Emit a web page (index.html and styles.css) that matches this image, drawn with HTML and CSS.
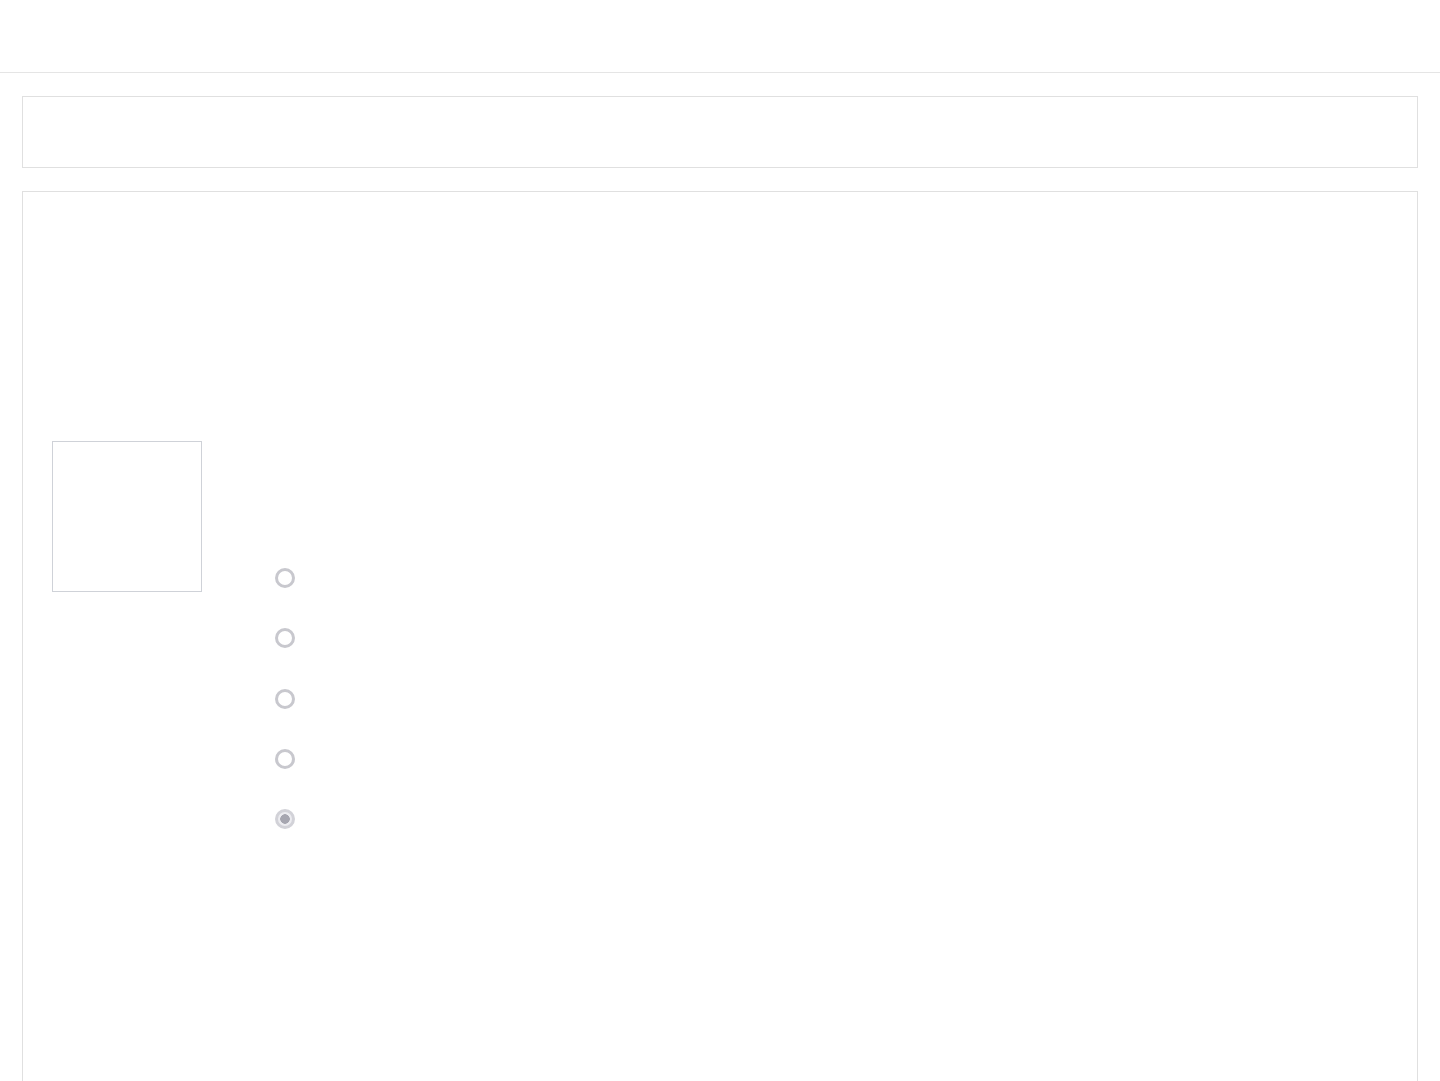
FILE: index.html
```html
<!DOCTYPE html>
<html lang="en">
<head>
  <meta charset="UTF-8">
  <title>Quiz</title>
  <meta name="viewport" content="width=device-width, initial-scale=1.0">
  <link rel="stylesheet" href="styles.css">
</head>
<body>
  <header class="topbar"></header>

  <main class="page">
    <!-- Toolbar strip -->
    <section class="panel toolbar"></section>

    <!-- Question card -->
    <section class="panel quiz">
      <div class="quiz-row">
        <div class="thumb"></div>
        <form class="options">
          <label class="option"><input type="radio" name="answer" disabled></label>
          <label class="option"><input type="radio" name="answer" disabled></label>
          <label class="option"><input type="radio" name="answer" disabled></label>
          <label class="option"><input type="radio" name="answer" disabled></label>
          <label class="option"><input type="radio" name="answer" checked disabled></label>
        </form>
      </div>
    </section>
  </main>
</body>
</html>
```

FILE: styles.css
```css
/* Plain quiz layout */
html, body {
  margin: 0;
  padding: 0;
  background-color: #fff;
  font-family: "Liberation Sans", Arial, sans-serif;
  overflow: hidden;
}
.topbar {
  height: 73px;
  border-bottom: 1px solid #e5e5e5;
  box-sizing: border-box;
}
.page {
  padding: 23px 22px 0;
}
.panel {
  border: 1px solid #e0e0e0;
  box-sizing: border-box;
}
.toolbar {
  height: 72px;
  margin-bottom: 23px;
}
.quiz {
  min-height: 1000px;
  border-bottom: none;
  padding: 249px 0 0 29px;
}
.quiz-row {
  display: flex;
  gap: 73px;
}
.thumb {
  width: 150px;
  height: 151px;
  border: 1px solid #cfd2d8;
  box-sizing: border-box;
  flex-shrink: 0;
}
.options {
  display: flex;
  flex-direction: column;
  gap: 40.25px;
  padding-top: 127px;
  margin: 0;
}
.option {
  display: block;
  height: 20px;
}
.option input {
  appearance: none;
  -webkit-appearance: none;
  margin: 0;
  width: 20px;
  height: 20px;
  border: 3px solid #c8c8ce;
  border-radius: 50%;
  box-sizing: border-box;
  background-color: #fff;
  display: block;
}
.option input:checked {
  border-color: #d2d2d8;
  background: radial-gradient(circle, #a6a6b0 0 4.5px, #ececf0 5px);
}
```
